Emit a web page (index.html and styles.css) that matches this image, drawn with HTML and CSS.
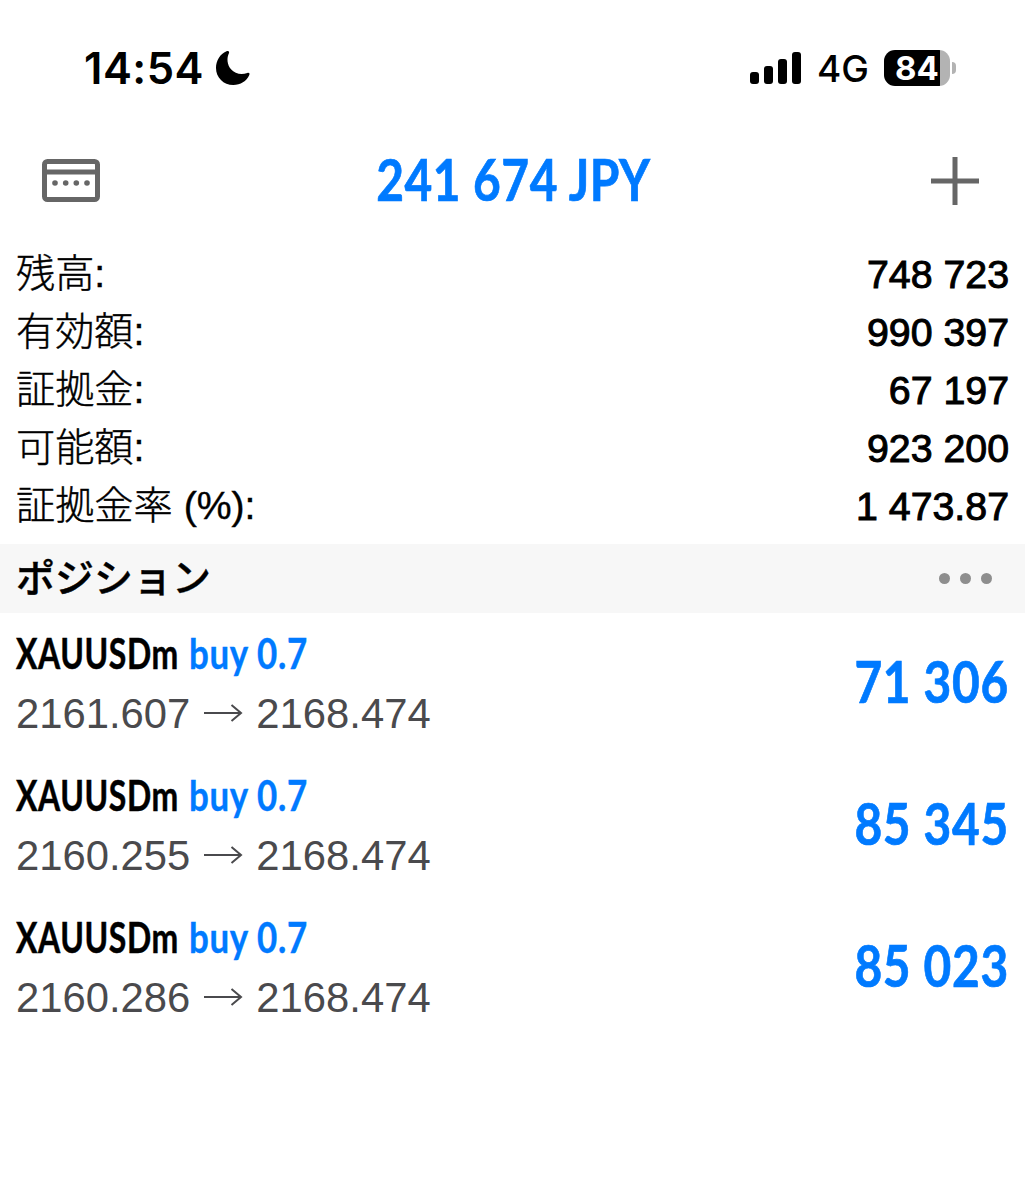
FILE: index.html
```html
<!DOCTYPE html>
<html lang="ja">
<head>
  <meta charset="UTF-8" />
  <meta name="viewport" content="width=device-width, initial-scale=1.0" />
  <title>241 674 JPY</title>
  <link rel="stylesheet" href="styles.css">
</head>
<body>

  <div class="status-bar">
    <div class="status-left">
      <span class="time">14:54</span>
      <svg class="moon" width="36" height="36" viewBox="0 0 36 36">
        <path d="M11.5 1.2C13.3 .4 14.6 1.4 14 3C11.5 8 12 14.5 16 19.3C20 24 26.5 25 32.3 23C34.2 22.5 34.9 23.4 34.3 25C31.5 31.2 25.5 35 18.3 35C8.5 35 1 27.5 1 18C1 10.5 5 4 11.5 1.2Z" />
      </svg>
    </div>
    <div class="status-right">
      <svg class="signal" width="52" height="34" viewBox="0 0 52 34">
        <rect x="1" y="21" width="9" height="12" rx="3" />
        <rect x="15" y="15" width="9" height="18" rx="3" />
        <rect x="29" y="8" width="9" height="25" rx="3" />
        <rect x="43" y="1" width="9" height="32" rx="3" />
      </svg>
      <span class="network">4G</span>
      <div class="battery"><span>84</span></div>
      <div class="battery-cap"></div>
    </div>
  </div>

  <header class="header">
    <svg width="58" height="43" viewBox="0 0 58 43">
      <rect x="2.5" y="2.5" width="53" height="38" rx="3" fill="none" stroke="#666" stroke-width="5" />
      <path d="M3 13H55" stroke="#666" stroke-width="5" />
      <g fill="#666">
        <circle cx="13" cy="24" r="2.8" />
        <circle cx="23.7" cy="24" r="2.8" />
        <circle cx="34.3" cy="24" r="2.8" />
        <circle cx="45" cy="24" r="2.8" />
      </g>
    </svg>
    <h1 class="total">241 674 JPY</h1>
    <svg width="48" height="48" viewBox="0 0 48 48">
      <path d="M0 24H48M24 0V48" stroke="#666" stroke-width="5" />
    </svg>
  </header>

  <section class="summary">
    <div class="summary-row"><span class="label">残高:</span><span class="value">748 723</span></div>
    <div class="summary-row"><span class="label">有効額:</span><span class="value">990 397</span></div>
    <div class="summary-row"><span class="label">証拠金:</span><span class="value">67 197</span></div>
    <div class="summary-row"><span class="label">可能額:</span><span class="value">923 200</span></div>
    <div class="summary-row"><span class="label">証拠金率 (%):</span><span class="value">1 473.87</span></div>
  </section>

  <div class="section-title">
    <h2>ポジション</h2>
    <div class="dots"><i></i><i></i><i></i></div>
  </div>

  <section class="positions">
    <div class="position">
      <div class="info">
        <div class="name"><span class="symbol">XAUUSDm</span><span class="side">buy 0.7</span></div>
        <div class="prices">
          <span>2161.607</span>
          <svg class="arrow" width="40" height="20" viewBox="0 0 40 20"><path d="M1 9H38M28.5 1L38 9L28.5 17" /></svg>
          <span>2168.474</span>
        </div>
      </div>
      <div class="profit">71 306</div>
    </div>
    <div class="position">
      <div class="info">
        <div class="name"><span class="symbol">XAUUSDm</span><span class="side">buy 0.7</span></div>
        <div class="prices">
          <span>2160.255</span>
          <svg class="arrow" width="40" height="20" viewBox="0 0 40 20"><path d="M1 9H38M28.5 1L38 9L28.5 17" /></svg>
          <span>2168.474</span>
        </div>
      </div>
      <div class="profit">85 345</div>
    </div>
    <div class="position">
      <div class="info">
        <div class="name"><span class="symbol">XAUUSDm</span><span class="side">buy 0.7</span></div>
        <div class="prices">
          <span>2160.286</span>
          <svg class="arrow" width="40" height="20" viewBox="0 0 40 20"><path d="M1 9H38M28.5 1L38 9L28.5 17" /></svg>
          <span>2168.474</span>
        </div>
      </div>
      <div class="profit">85 023</div>
    </div>
  </section>

</body>
</html>
```
FILE: styles.css
```css
* {
  box-sizing: border-box;
}

body {
  margin: 0;
  background: #fff;
  color: #000;
  font-family: "Liberation Sans", "Noto Sans CJK JP", sans-serif;
}

h1, h2 {
  margin: 0;
}

.status-bar {
  display: flex;
  justify-content: space-between;
  align-items: center;
  height: 136px;
  padding: 0 69px 0 84px;
  font-family: Inter, sans-serif;
}

.status-left,
.status-right {
  display: flex;
  align-items: center;
}

.time {
  width: 131px;
  font-size: 43.5px;
  font-weight: 600;
  letter-spacing: 0.5px;
  white-space: nowrap;
}

.network {
  width: 68px;
  padding-top: 2px;
  padding-left: 16px;
  font-size: 37px;
  font-weight: 450;
  line-height: 44px;
}

.signal {
  width: 52px;
}

.battery {
  width: 66px;
  height: 36px;
  margin-left: 15px;
  padding-left: 11px;
  border-radius: 11px;
  background: linear-gradient(90deg, #000 56px, #b3b3b3 56px);
  color: #fff;
  font-size: 33px;
  font-weight: 700;
  line-height: 37px;
}

.battery-cap {
  width: 4px;
  height: 12px;
  margin-left: 2px;
  border-radius: 0 6px 6px 0;
  background: #b3b3b3;
}

.header {
  display: flex;
  justify-content: space-between;
  align-items: center;
  height: 90px;
  padding: 0 46px 1px 42px;
}

.total {
  margin-right: 5px;
  padding-bottom: 3px;
  color: #007aff;
  font-family: Lato, sans-serif;
  font-size: 57px;
  font-weight: 700;
  letter-spacing: 0.6px;
  line-height: 80px;
  transform: scaleX(0.84);
  -webkit-text-stroke: 0.7px #007aff;
}

.summary {
  padding: 19px 16px 9px;
}

.summary-row {
  display: flex;
  justify-content: space-between;
  align-items: center;
  height: 58px;
}

.label {
  font-size: 39.2px;
  font-weight: 300;
  line-height: 58px;
  -webkit-text-stroke: 0.4px #000;
}

.value {
  font-size: 39.3px;
  line-height: 58px;
  -webkit-text-stroke: 1px #000;
}

.section-title {
  display: flex;
  justify-content: space-between;
  align-items: center;
  height: 69px;
  padding: 0 33px 0 16px;
  background: #f7f7f7;
}

.section-title h2 {
  font-size: 39px;
  font-weight: 500;
  line-height: 60px;
  -webkit-text-stroke: 0.4px #000;
}

.dots {
  display: flex;
  gap: 10px;
}

.dots i {
  width: 11px;
  height: 11px;
  border-radius: 50%;
  background: #8e8e8e;
}

.position {
  display: flex;
  justify-content: space-between;
  height: 142px;
  padding: 10px 16px 0;
}

.name {
  display: flex;
  height: 61px;
  font-family: Lato, sans-serif;
  font-size: 42px;
  font-weight: 700;
  line-height: 60px;
  white-space: nowrap;
}

.symbol {
  width: 173px;
  letter-spacing: 0.8px;
  transform: scaleX(0.76);
  transform-origin: left;
  -webkit-text-stroke: 0.5px #000;
}

.side {
  color: #007aff;
  letter-spacing: 0.8px;
  transform: scaleX(0.83);
  transform-origin: left;
  -webkit-text-stroke: 0.4px #007aff;
}

.prices {
  display: flex;
  align-items: center;
  gap: 13px;
  height: 60px;
  color: #4a4a4d;
  font-size: 41.8px;
}

.arrow {
  fill: none;
  stroke: #4a4a4d;
  stroke-width: 2;
}

.profit {
  color: #007aff;
  font-family: Lato, sans-serif;
  font-size: 57px;
  font-weight: 700;
  letter-spacing: 0.8px;
  line-height: 116px;
  transform: scaleX(0.84);
  transform-origin: right;
  -webkit-text-stroke: 0.7px #007aff;
}
```
